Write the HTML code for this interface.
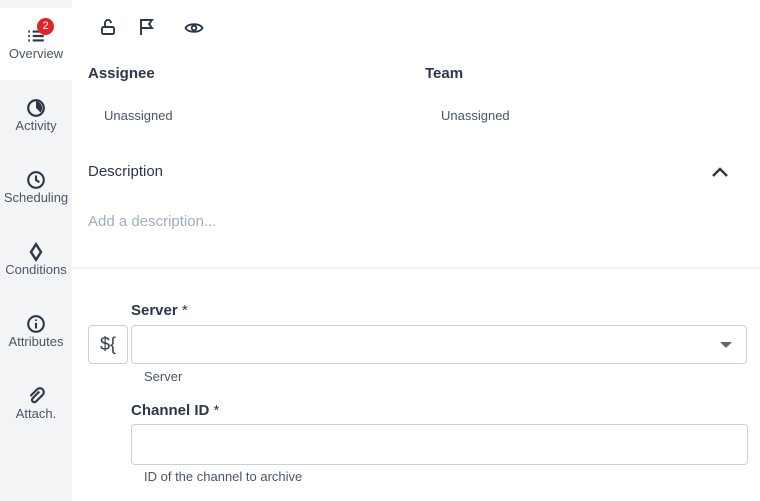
<!DOCTYPE html>
<html><head><style>
*{box-sizing:border-box;margin:0;padding:0}
body{width:760px;height:501px;overflow:hidden;background:#fff;font-family:"Liberation Sans",sans-serif;color:#2d3748;position:relative}
.sb{position:absolute;left:0;top:0;width:72px;height:501px;background:#f3f4f6}
.it{position:absolute;left:0;width:72px;height:72px;text-align:center;font-size:13px;color:#4a5568}
.it svg{position:absolute;left:26px;top:18px}
.it span{position:absolute;left:0;right:0;top:38px}
.act{background:#fff}
.abs{position:absolute}
.h{font-weight:bold;font-size:15px;color:#2d3748}
.s{font-size:13px;color:#4a5568}
</style></head><body>
<div class="sb">
<div class="it act" style="top:8px"><svg width="20" height="20" viewBox="0 0 18 18" fill="none" stroke="#2d3748" stroke-width="2"><path d="M2 5h1.5M6 5h10M2 9h1.5M6 9h10M2 13h1.5M6 13h10"/></svg><span>Overview</span>
<div class="abs" style="left:37px;top:10px;width:17px;height:17px;border-radius:50%;background:#e02424;color:#fff;font-size:11px;line-height:17px;text-align:center">2</div></div>
<div class="it" style="top:80px"><svg width="20" height="20" viewBox="0 0 18 18"><circle cx="9" cy="9" r="7" fill="none" stroke="#2d3748" stroke-width="2"/><path d="M9 9V3a6 6 0 0 1 4 10z" fill="#2d3748"/></svg><span>Activity</span></div>
<div class="it" style="top:152px"><svg width="20" height="20" viewBox="0 0 18 18" fill="none" stroke="#2d3748" stroke-width="1.9"><circle cx="9" cy="9" r="7"/><path d="M9 5v4l3 2"/></svg><span>Scheduling</span></div>
<div class="it" style="top:224px"><svg width="20" height="20" viewBox="0 0 18 18" fill="none" stroke="#2d3748" stroke-width="2.2"><path d="M9 2l4.5 7-4.5 7-4.5-7z"/></svg><span>Conditions</span></div>
<div class="it" style="top:296px"><svg width="20" height="20" viewBox="0 0 18 18" fill="none" stroke="#2d3748" stroke-width="1.9"><circle cx="9" cy="9" r="7"/><path d="M9 8v5M9 5v1.2"/></svg><span>Attributes</span></div>
<div class="it" style="top:368px"><svg width="20" height="20" viewBox="0 0 18 18" fill="none" stroke="#2d3748" stroke-width="1.9"><path d="M12 5l-6 6a2 2 0 0 0 3 3l6-6a3.5 3.5 0 0 0-5-5l-6 6"/></svg><span>Attach.</span></div>
</div>
<svg class="abs" style="left:99px;top:18px" width="18" height="18" viewBox="0 0 18 18" fill="none" stroke="#2d3748" stroke-width="1.9"><rect x="3" y="9" width="12" height="7" rx="1.5"/><path d="M6 9V5a3 3 0 0 1 6 0"/></svg>
<svg class="abs" style="left:138px;top:18px" width="18" height="18" viewBox="0 0 18 18" fill="none" stroke="#2d3748" stroke-width="1.9"><path d="M3 17V2h11l-3 4 3 4H3"/></svg>
<svg class="abs" style="left:184px;top:19px" width="20" height="18" viewBox="0 0 20 18" fill="none" stroke="#2d3748" stroke-width="1.9"><path d="M1.5 9C4 4 16 4 18.5 9 16 14 4 14 1.5 9z"/><circle cx="10" cy="9" r="2.3"/></svg>
<div class="abs h" style="left:88px;top:65px">Assignee</div>
<div class="abs h" style="left:425px;top:65px">Team</div>
<div class="abs s" style="left:104px;top:108px">Unassigned</div>
<div class="abs s" style="left:441px;top:108px">Unassigned</div>
<div class="abs" style="left:88px;top:163px;font-size:15px;color:#2d3748">Description</div>
<svg class="abs" style="left:711px;top:166px" width="18" height="12" viewBox="0 0 18 12" fill="none" stroke="#2d3748" stroke-width="2.4"><path d="M2 10l7-7 7 7"/></svg>
<div class="abs" style="left:88px;top:213px;font-size:15px;color:#a0aec0">Add a description...</div>
<div class="abs" style="left:72px;top:267px;width:688px;height:2px;background:#f1f2f4"></div>
<div class="abs h" style="left:131px;top:302px">Server <span style="font-weight:normal">*</span></div>
<div class="abs" style="left:88px;top:325px;width:40px;height:39px;border:1px solid #cbd0d6;border-radius:4px;font-size:18px;line-height:37px;text-align:center;color:#2d3748">${</div>
<div class="abs" style="left:131px;top:325px;width:616px;height:39px;border:1px solid #cbd0d6;border-radius:4px"></div>
<div class="abs" style="left:720px;top:342px;width:0;height:0;border-left:6px solid transparent;border-right:6px solid transparent;border-top:6px solid #666"></div>
<div class="abs s" style="left:144px;top:369px">Server</div>
<div class="abs h" style="left:131px;top:402px">Channel ID <span style="font-weight:normal">*</span></div>
<div class="abs" style="left:131px;top:424px;width:617px;height:41px;border:1px solid #cbd0d6;border-radius:4px"></div>
<div class="abs s" style="left:144px;top:469px">ID of the channel to archive</div>
</body></html>
